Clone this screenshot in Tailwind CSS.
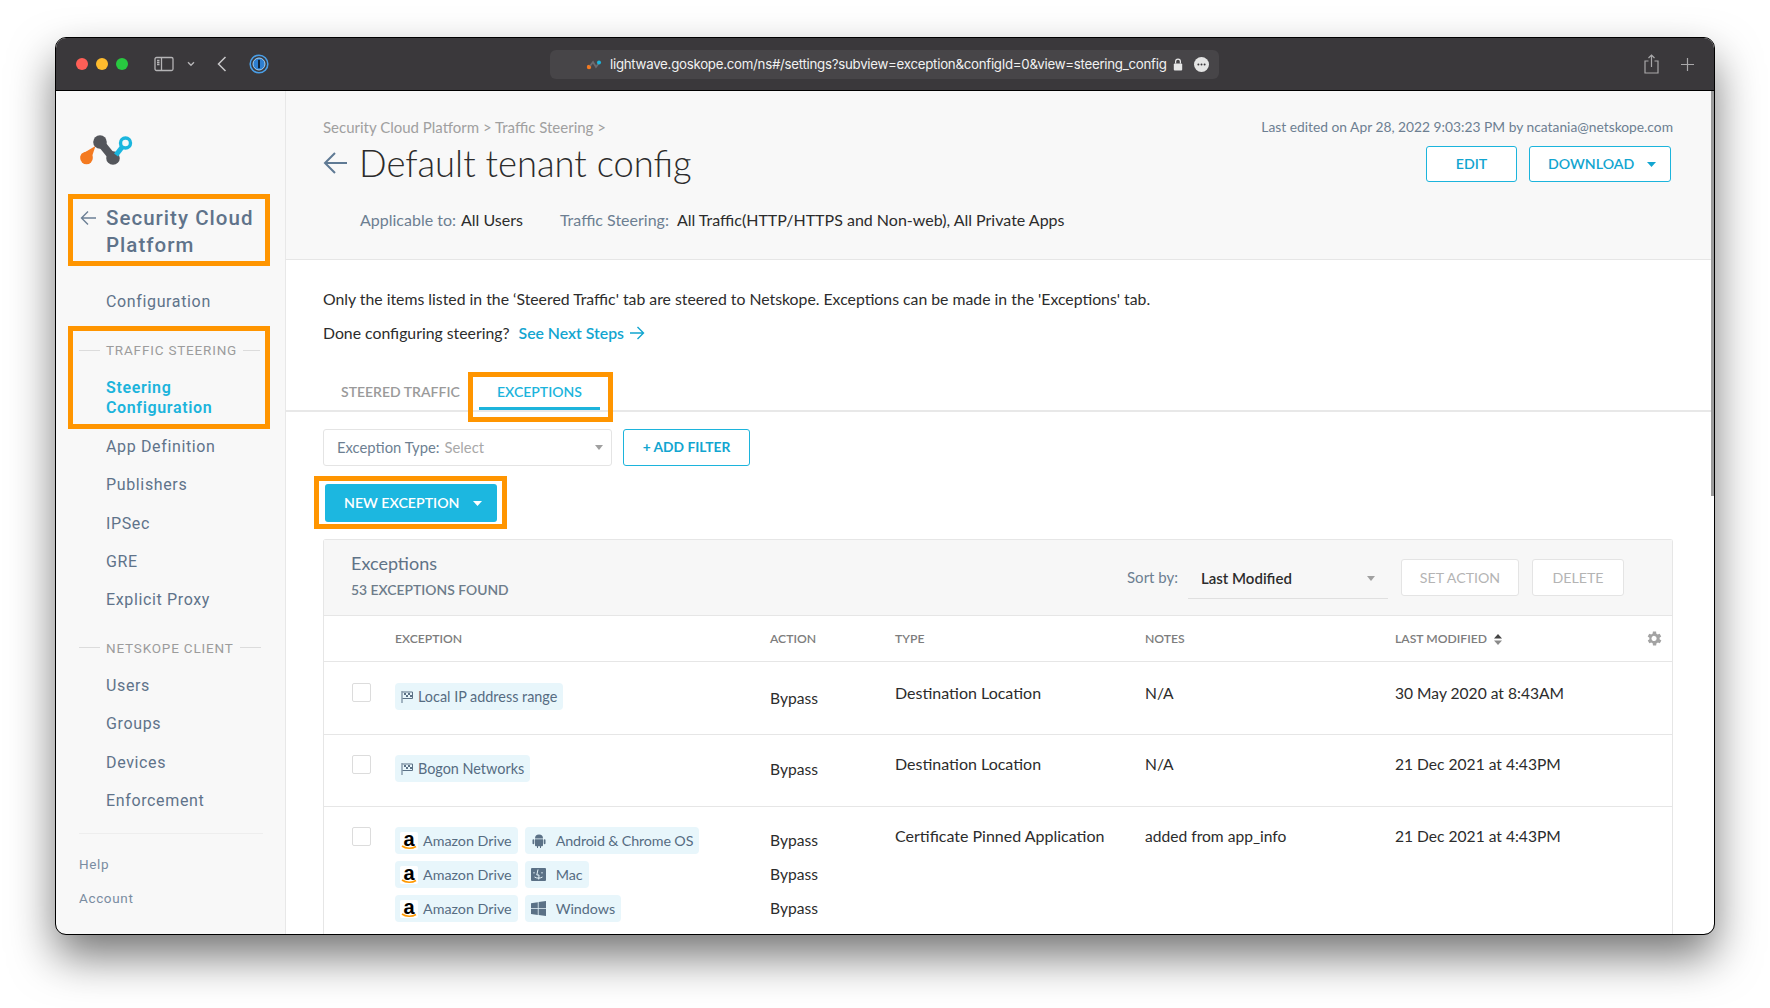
<!DOCTYPE html>
<html lang="en">
<head>
    <meta charset="UTF-8">
    <title>Default tenant config</title>
    <script src="https://cdn.jsdelivr.net/npm/@tailwindcss/browser@4"></script>
</head>
<body class="bg-white h-[1008px] overflow-hidden pt-[38px] pl-[56px] font-['Lato',sans-serif]">
    <div class="relative w-[1658px] h-[896px] rounded-[10px] overflow-hidden bg-white flex flex-col shadow-[0_22px_45px_rgba(0,0,0,0.55)] outline outline-1 outline-black">

        <!-- safari toolbar -->
        <div class="h-[53px] shrink-0 bg-[#3a383b] border-b border-black flex items-center text-[#b9b8ba] relative">
            <div class="flex gap-[8px] ml-[20px]">
                <span class="w-[12px] h-[12px] rounded-full bg-[#ff5f57]"></span>
                <span class="w-[12px] h-[12px] rounded-full bg-[#febc2e]"></span>
                <span class="w-[12px] h-[12px] rounded-full bg-[#28c840]"></span>
            </div>
            <svg class="ml-[26px]" width="20" height="16" viewBox="0 0 20 16" fill="none" stroke="#b5b4b6" stroke-width="1.3"><rect x="1" y="1.5" width="18" height="13" rx="1.5"/><path d="M7.5 1.5v13M3 4.5h2.5M3 6.5h2.5M3 8.5h2.5"/></svg>
            <svg class="ml-[13px]" width="8" height="6" viewBox="0 0 8 6" fill="none" stroke="#b5b4b6" stroke-width="1.4"><path d="M1 1.2l3 3 3-3"/></svg>
            <svg class="ml-[22px]" width="10" height="16" viewBox="0 0 10 16" fill="none" stroke="#c9c8ca" stroke-width="1.5"><path d="M8.5 1L1.5 8l7 7"/></svg>
            <svg class="ml-[22px]" width="20" height="20" viewBox="0 0 20 20" fill="none"><circle cx="10" cy="10" r="8.8" stroke="#4a9fe8" stroke-width="1.6"/><circle cx="10" cy="10" r="6" fill="#2f7fd0" stroke="#9fd0f5" stroke-width="1"/><rect x="9" y="5.8" width="2" height="8.4" fill="#10243a"/></svg>

            <div class="absolute left-[494px] w-[669px] h-[29px] top-[12px] rounded-[6px] bg-[#474548] flex items-center text-white">
                <svg class="ml-[36px]" width="16" height="10" viewBox="0 0 16 10" fill="none"><circle cx="3" cy="7" r="2.2" fill="#f47a20"/><path d="M4 6l3-4 3 5 3-4" stroke="#6b6b70" stroke-width="1.8"/><circle cx="13" cy="2.6" r="2" fill="#1bb6de"/></svg>
                <span class="ml-[8px] font-['Inter',sans-serif] text-[13.27px] tracking-[-0.02em] text-[#f1f1f1] whitespace-nowrap">lightwave.goskope.com/ns#/settings?subview=exception&amp;configId=0&amp;view=steering_config</span>
                <svg class="ml-[6px]" width="10" height="13" viewBox="0 0 10 13" fill="none"><rect x="0.8" y="5.5" width="8.4" height="7" rx="1" fill="#e6e6e6"/><path d="M2.6 5.5V3.6a2.4 2.4 0 0 1 4.8 0v1.9" stroke="#e6e6e6" stroke-width="1.2"/></svg>
                <svg class="ml-[11px]" width="15" height="15" viewBox="0 0 15 15"><circle cx="7.5" cy="7.5" r="7.5" fill="#e4e4e4"/><circle cx="4.4" cy="7.5" r="1" fill="#3a383b"/><circle cx="7.5" cy="7.5" r="1" fill="#3a383b"/><circle cx="10.6" cy="7.5" r="1" fill="#3a383b"/></svg>
            </div>

            <div class="ml-auto flex items-center gap-[22px] mr-[20px]">
                <svg width="15" height="20" viewBox="0 0 15 20" fill="none" stroke="#a9a8aa" stroke-width="1.2"><path d="M4.5 7H1v12h13V7h-3.5M7.5 13V1M4.5 4l3-3 3 3"/></svg>
                <svg width="13" height="13" viewBox="0 0 13 13" fill="none" stroke="#a9a8aa" stroke-width="1.2"><path d="M6.5 0v13M0 6.5h13"/></svg>
            </div>
        </div>

        <div class="flex flex-1 min-h-0">
            <!-- sidebar -->
            <aside class="w-[230px] shrink-0 bg-[#f8f8f8] border-r border-[#e8e8e8] font-['Roboto',sans-serif] text-[16px] tracking-[0.04em] text-[#5f738a]">
                <div class="pt-[44px] pl-[24px]">
                    <svg width="53" height="32" viewBox="0 0 53 32" fill="none">
                        <path d="M15.5 11L1 19.5l9 8z" fill="#f47a20"/>
                        <circle cx="6.5" cy="23" r="6.3" fill="#f47a20"/>
                        <path d="M20 7l13 16" stroke="#54565b" stroke-width="8"/>
                        <circle cx="20" cy="7" r="6.8" fill="#54565b"/>
                        <circle cx="33" cy="23" r="6.8" fill="#54565b"/>
                        <path d="M36 20l7-9" stroke="#1bb6de" stroke-width="5"/>
                        <circle cx="45.5" cy="8" r="5" fill="#f8f8f8" stroke="#1bb6de" stroke-width="3.4"/>
                    </svg>
                </div>
                <div class="flex mt-[38px] pl-[24px]">
                    <svg class="mt-[5px]" width="17" height="16" viewBox="0 0 17 16" fill="none" stroke="#6b7f95" stroke-width="1.4"><path d="M16 8H1.5M8 1.5L1.5 8 8 14.5"/></svg>
                    <div class="ml-[9px] text-[20.5px] leading-[27px] font-medium tracking-[0.05em] text-[#5f738a]">Security Cloud<br>Platform</div>
                </div>
                <div class="mt-[24px] h-[38.3px] flex items-center pl-[50px]">Configuration</div>

                <div class="mt-[10px] h-[38px] flex items-center pl-[23px] text-[13.5px] tracking-[0.06em] text-[#9c9c9c]">
                    <span class="w-[21px] h-px bg-[#dcdcdc]"></span><span class="mx-[6px]">TRAFFIC STEERING</span><span class="w-[17px] h-px bg-[#dcdcdc]"></span>
                </div>
                <div class="pl-[50px] mt-[9px] leading-[20px] font-semibold text-[#1cb4dc]">Steering<br>Configuration</div>
                <div class="mt-[9.5px] h-[38.3px] flex items-center pl-[50px]">App Definition</div>
                <div class="h-[38.3px] flex items-center pl-[50px]">Publishers</div>
                <div class="h-[38.3px] flex items-center pl-[50px]">IPSec</div>
                <div class="h-[38.3px] flex items-center pl-[50px]">GRE</div>
                <div class="h-[38.3px] flex items-center pl-[50px]">Explicit Proxy</div>
                <div class="mt-[9.5px] h-[38px] flex items-center pl-[23px] text-[13.5px] tracking-[0.06em] text-[#9c9c9c]">
                    <span class="w-[21px] h-px bg-[#dcdcdc]"></span><span class="mx-[6px]">NETSKOPE CLIENT</span><span class="w-[21px] h-px bg-[#dcdcdc]"></span>
                </div>
                <div class="h-[38.3px] flex items-center pl-[50px]">Users</div>
                <div class="h-[38.3px] flex items-center pl-[50px]">Groups</div>
                <div class="h-[38.3px] flex items-center pl-[50px]">Devices</div>
                <div class="h-[38.3px] flex items-center pl-[50px]">Enforcement</div>
                <div class="ml-[23px] mr-[22px] mt-[13px] h-px bg-[#eeeeee]"></div>
                <div class="mt-[15px] h-[30px] flex items-center pl-[23px] text-[13.5px] text-[#7a8ca1]">Help</div>
                <div class="mt-[4px] h-[30px] flex items-center pl-[23px] text-[13.5px] text-[#7a8ca1]">Account</div>
            </aside>

            <!-- main -->
            <main class="flex-1 min-w-0 relative">
                <div class="h-[169px] bg-[#f8f8f8] border-b border-[#e6e6e6] pl-[37px] pr-[41px] pt-[26px] relative">
                    <div class="flex justify-between text-[15px] leading-[20px]">
                        <span class="text-[#a0a0a0]">Security Cloud Platform &gt; Traffic Steering &gt;</span>
                        <span class="text-[13.8px] text-[#6d7f92]">Last edited on Apr 28, 2022 9:03:23 PM by ncatania@netskope.com</span>
                    </div>
                    <div class="flex justify-between">
                        <div class="flex items-center h-[48px] mt-[2px]">
                            <svg width="24" height="24" viewBox="0 0 24 24" fill="none" stroke="#5f7a94" stroke-width="2"><path d="M24 12H2M12 2L2 12l10 10"/></svg>
                            <h1 class="ml-[12px] text-[36.4px] font-light text-[#2c2c2c] whitespace-nowrap">Default tenant config</h1>
                        </div>
                        <div class="flex gap-[12px] mr-[2px] mt-[9px]">
                            <button class="w-[91px] h-[36px] border border-[#1cb4dc] rounded-[3px] bg-white text-[14.2px] font-semibold text-[#12a5d0]">EDIT</button>
                            <button class="w-[142px] h-[36px] border border-[#1cb4dc] rounded-[3px] bg-white text-[14.2px] font-semibold text-[#12a5d0] flex items-center pl-[18px]">DOWNLOAD
                                <svg class="ml-[13px]" width="9" height="5" viewBox="0 0 9 5"><path d="M0 0h9L4.5 5z" fill="#12a5d0"/></svg>
                            </button>
                        </div>
                    </div>
                    <div class="ml-[37px] mt-[22px] flex text-[16px] leading-[22px] whitespace-nowrap">
                        <span class="text-[#6d7f92]">Applicable to:</span><span class="ml-[5px] text-[#2c2c2c]">All Users</span>
                        <span class="ml-[37px] text-[#6d7f92]">Traffic Steering:</span><span class="ml-[8px] text-[#2c2c2c]">All Traffic(HTTP/HTTPS and Non-web), All Private Apps</span>
                    </div>
                </div>

                <div class="pl-[37px] pt-[28px] text-[15.8px] leading-[22px] text-[#2c2c2c]">
                    <p>Only the items listed in the ‘Steered Traffic' tab are steered to Netskope. Exceptions can be made in the 'Exceptions' tab.</p>
                    <p class="mt-[12px] flex items-center">Done configuring steering?
                        <span class="ml-[9px] font-semibold text-[#12a5d0] flex items-center">See Next Steps
                            <svg class="ml-[6px]" width="15" height="14" viewBox="0 0 15 14" fill="none" stroke="#12a5d0" stroke-width="1.4"><path d="M0 7h13.5M7.5 1l6 6-6 6"/></svg>
                        </span>
                    </p>
                </div>

                <div class="mt-[25px] h-[43px] border-b-2 border-[#e8e8e8] flex pl-[37px] text-[14px] font-semibold">
                    <div class="w-[156px] pl-[18px] pt-[12px] text-[#9a9a9a]">STEERED TRAFFIC</div>
                    <div class="w-[121px] pl-[18px] pt-[12px] text-[#1cb4dc] h-[41px] border-b-[3px] border-[#1cb4dc]">EXCEPTIONS</div>
                </div>

                <div class="flex gap-[11px] pl-[37px] mt-[17px]">
                    <div class="w-[289px] h-[37px] border border-[#e4e4e4] rounded-[3px] flex items-center pl-[13px] pr-[8px] text-[14.8px]">
                        <span class="text-[#6d7f92]">Exception Type:</span><span class="ml-[5px] text-[#a8a8a8]">Select</span>
                        <svg class="ml-auto" width="8" height="5" viewBox="0 0 8 5"><path d="M0 0h8L4 5z" fill="#a0a0a0"/></svg>
                    </div>
                    <button class="w-[127px] h-[37px] border border-[#1cb4dc] rounded-[3px] text-[13.8px] font-bold text-[#12a5d0]">+ ADD FILTER</button>
                </div>

                <button class="ml-[39px] mt-[18px] w-[172px] h-[38px] bg-[#1cb7e0] rounded-[3px] flex items-center pl-[19px] text-[14.2px] font-semibold text-white">NEW EXCEPTION
                    <svg class="ml-[13px]" width="9" height="5" viewBox="0 0 9 5"><path d="M0 0h9L4.5 5z" fill="#fff"/></svg>
                </button>

                <section class="ml-[37px] w-[1350px] mt-[17px] border-x border-t border-[#e6e6e6] rounded-t-[3px]">
                    <div class="h-[76px] bg-[#f7f7f7] border-b border-[#e6e6e6] flex items-center pl-[27px] relative">
                        <div class="mb-[4px]">
                            <div class="text-[18px] leading-[24px] text-[#5f7387]">Exceptions</div>
                            <div class="mt-[4px] text-[13.9px] leading-[22px] font-semibold text-[#6d7c8a]">53 EXCEPTIONS FOUND</div>
                        </div>
                        <div class="ml-auto mr-[48px] flex items-center">
                            <span class="text-[15px] text-[#6d7f92]">Sort by:</span>
                            <div class="ml-[10px] w-[200px] h-[38px] mt-[4px] pb-[2px] border-b border-[#e0e0e0] flex items-center pl-[13px] pr-[13px] text-[15px] font-semibold text-[#2c2c2c]">Last Modified
                                <svg class="ml-auto" width="8" height="5" viewBox="0 0 8 5"><path d="M0 0h8L4 5z" fill="#a0a0a0"/></svg>
                            </div>
                            <button class="ml-[13px] w-[118px] h-[37px] border border-[#e4e4e4] rounded-[3px] bg-white text-[14.2px] text-[#b4b4b4]">SET ACTION</button>
                            <button class="ml-[13px] w-[92px] h-[37px] border border-[#e4e4e4] rounded-[3px] bg-white text-[14.2px] text-[#b4b4b4]">DELETE</button>
                        </div>
                    </div>

                    <div class="h-[46px] pt-[2px] border-b border-[#e6e6e6] grid grid-cols-[71px_375px_125px_250px_250px_1fr] items-center text-[12.2px] font-semibold text-[#7d7d7d]">
                        <span></span>
                        <span>EXCEPTION</span>
                        <span>ACTION</span>
                        <span>TYPE</span>
                        <span>NOTES</span>
                        <div class="flex items-center">LAST MODIFIED
                            <svg class="ml-[7px]" width="8" height="11" viewBox="0 0 8 11"><path d="M0 4.5L4 0l4 4.5z" fill="#444"/><path d="M0 6.5L4 11l4-4.5z" fill="#8a8a8a"/></svg>
                            <svg class="ml-auto mr-[8px] -mt-[2px]" width="19" height="19" viewBox="0 0 24 24"><path fill="#a3a3a3" d="M19.4 13a7.6 7.6 0 0 0 0-2l2.1-1.6-2-3.5-2.5 1a7.6 7.6 0 0 0-1.7-1L15 3.3h-4l-.4 2.6a7.6 7.6 0 0 0-1.7 1l-2.5-1-2 3.5L6.6 11a7.6 7.6 0 0 0 0 2l-2.1 1.6 2 3.5 2.5-1a7.6 7.6 0 0 0 1.7 1l.4 2.6h4l.4-2.6a7.6 7.6 0 0 0 1.7-1l2.5 1 2-3.5zM13 15.2a3.3 3.3 0 1 1 0-6.5 3.3 3.3 0 0 1 0 6.5z" transform="translate(-1 0)"/></svg>
                        </div>
                    </div>

                    <div class="h-[73px] border-b border-[#e6e6e6] grid grid-cols-[71px_375px_125px_250px_250px_1fr] text-[15.6px] leading-[20px] text-[#2c2c2c]">
                        <div class="pl-[28px] pt-[21px]"><div class="w-[19px] h-[19px] border border-[#dcdcdc] rounded-[2px]"></div></div>
                        <div class="pt-[21px]">
                            <span class="inline-flex items-center h-[27px] px-[6px] rounded-[4px] bg-[#e8f6fb] text-[14.4px] text-[#566c82]">
                                <svg width="12" height="12" viewBox="0 0 12 12"><path d="M1 0v12" stroke="#5b7186" stroke-width="1"/><path fill="none" stroke="#5b7186" d="M1.5 1h10v6.5h-10"/><path fill="#5b7186" d="M3 2h2v2H3zM7 2h2v2H7zM5 4h2v2H5zM9 4h2v2H9z"/></svg>
                                <span class="ml-[5px]">Local IP address range</span>
                            </span>
                        </div>
                        <div class="pt-[26px]">Bypass</div>
                        <div class="pt-[21px] text-[16px]">Destination Location</div>
                        <div class="pt-[21px]">N/A</div>
                        <div class="pt-[21px]">30 May 2020 at 8:43AM</div>
                    </div>

                    <div class="h-[72px] border-b border-[#e6e6e6] grid grid-cols-[71px_375px_125px_250px_250px_1fr] text-[15.6px] leading-[20px] text-[#2c2c2c]">
                        <div class="pl-[28px] pt-[20px]"><div class="w-[19px] h-[19px] border border-[#dcdcdc] rounded-[2px]"></div></div>
                        <div class="pt-[20px]">
                            <span class="inline-flex items-center h-[27px] px-[6px] rounded-[4px] bg-[#e8f6fb] text-[14.4px] text-[#566c82]">
                                <svg width="12" height="12" viewBox="0 0 12 12"><path d="M1 0v12" stroke="#5b7186" stroke-width="1"/><path fill="none" stroke="#5b7186" d="M1.5 1h10v6.5h-10"/><path fill="#5b7186" d="M3 2h2v2H3zM7 2h2v2H7zM5 4h2v2H5zM9 4h2v2H9z"/></svg>
                                <span class="ml-[5px]">Bogon Networks</span>
                            </span>
                        </div>
                        <div class="pt-[24px]">Bypass</div>
                        <div class="pt-[19px] text-[16px]">Destination Location</div>
                        <div class="pt-[19px]">N/A</div>
                        <div class="pt-[19px]">21 Dec 2021 at 4:43PM</div>
                    </div>

                    <div class="pb-[30px] grid grid-cols-[71px_375px_125px_250px_250px_1fr] text-[15.6px] leading-[20px] text-[#2c2c2c]">
                        <div class="pl-[28px] pt-[20px]"><div class="w-[19px] h-[19px] border border-[#dcdcdc] rounded-[2px]"></div></div>
                        <div class="pt-[20px] flex flex-col gap-[7px]">
                            <div class="flex gap-[7px]">
                                <span class="inline-flex items-center h-[27px] pl-[5px] pr-[6px] rounded-[4px] bg-[#e8f6fb] text-[14.3px] text-[#566c82]">
                                    <span class="relative w-[18px] h-[18px] rounded-[2px] bg-white flex justify-center overflow-visible">
                                        <span class="font-['Liberation_Sans',sans-serif] font-bold text-[20px] leading-[15px] text-black">a</span>
                                        <svg class="absolute left-0 bottom-0" width="18" height="5" viewBox="0 0 18 5" fill="none"><path d="M2 1c4 3 10 3 14 .5" stroke="#f90" stroke-width="1.6"/></svg>
                                    </span>
                                    <span class="ml-[5px]">Amazon Drive</span>
                                </span>
                                <span class="inline-flex items-center h-[27px] pl-[7px] pr-[6px] rounded-[4px] bg-[#e8f6fb] text-[14.3px] text-[#566c82]">
                                    <svg width="14" height="15" viewBox="0 0 14 15" fill="#5b7186"><path d="M3 5.5a4 4 0 0 1 8 0zM3 6.2h8v6a1 1 0 0 1-1 1H9V15H8v-1.8H6V15H5v-1.8H4a1 1 0 0 1-1-1z"/><rect x="0.5" y="6.2" width="1.8" height="5" rx=".9"/><rect x="11.7" y="6.2" width="1.8" height="5" rx=".9"/></svg>
                                    <span class="ml-[10px] tracking-[-0.01em]">Android &amp; Chrome OS</span>
                                </span>
                            </div>
                            <div class="flex gap-[7px]">
                                <span class="inline-flex items-center h-[27px] pl-[5px] pr-[6px] rounded-[4px] bg-[#e8f6fb] text-[14.3px] text-[#566c82]">
                                    <span class="relative w-[18px] h-[18px] rounded-[2px] bg-white flex justify-center overflow-visible">
                                        <span class="font-['Liberation_Sans',sans-serif] font-bold text-[20px] leading-[15px] text-black">a</span>
                                        <svg class="absolute left-0 bottom-0" width="18" height="5" viewBox="0 0 18 5" fill="none"><path d="M2 1c4 3 10 3 14 .5" stroke="#f90" stroke-width="1.6"/></svg>
                                    </span>
                                    <span class="ml-[5px]">Amazon Drive</span>
                                </span>
                                <span class="inline-flex items-center h-[27px] pl-[6px] pr-[6px] rounded-[4px] bg-[#e8f6fb] text-[14.3px] text-[#566c82]">
                                    <svg width="15" height="13" viewBox="0 0 15 13"><rect width="15" height="13" rx="1" fill="#5b7186"/><path d="M7 1.5L5.8 7H8l-.3 4.5M3 4v1.5M11 4v1.5M3.5 9c2.5 1.5 5.5 1.5 8 0" stroke="#e8f6fb" stroke-width="1" fill="none"/></svg>
                                    <span class="ml-[10px]">Mac</span>
                                </span>
                            </div>
                            <div class="flex gap-[7px]">
                                <span class="inline-flex items-center h-[27px] pl-[5px] pr-[6px] rounded-[4px] bg-[#e8f6fb] text-[14.3px] text-[#566c82]">
                                    <span class="relative w-[18px] h-[18px] rounded-[2px] bg-white flex justify-center overflow-visible">
                                        <span class="font-['Liberation_Sans',sans-serif] font-bold text-[20px] leading-[15px] text-black">a</span>
                                        <svg class="absolute left-0 bottom-0" width="18" height="5" viewBox="0 0 18 5" fill="none"><path d="M2 1c4 3 10 3 14 .5" stroke="#f90" stroke-width="1.6"/></svg>
                                    </span>
                                    <span class="ml-[5px]">Amazon Drive</span>
                                </span>
                                <span class="inline-flex items-center h-[27px] pl-[6px] pr-[6px] rounded-[4px] bg-[#e8f6fb] text-[14.3px] text-[#566c82]">
                                    <svg width="15" height="15" viewBox="0 0 15 15" fill="#5b7186"><path d="M0 2.2l6.8-1v6H0zM7.6 1l7.4-1v7.2H7.6zM0 8h6.8v6L0 13zM7.6 8H15v7l-7.4-1z"/></svg>
                                    <span class="ml-[10px]">Windows</span>
                                </span>
                            </div>
                        </div>
                        <div class="pt-[23px] flex flex-col gap-[14px]"><span>Bypass</span><span>Bypass</span><span>Bypass</span></div>
                        <div class="pt-[19px] text-[16px]">Certificate Pinned Application</div>
                        <div class="pt-[19px]">added from app_info</div>
                        <div class="pt-[19px]">21 Dec 2021 at 4:43PM</div>
                    </div>
                </section>
            </main>
        </div>

        <!-- page scrollbar -->
        <div class="absolute right-0 top-[53px] w-[3px] h-[405px] bg-[#9a9a9a]"></div>

        <!-- orange callouts -->
        <div class="absolute left-[12px] top-[156px] w-[202px] h-[72px] border-[5px] border-[#ff9500]"></div>
        <div class="absolute left-[12px] top-[288px] w-[202px] h-[103px] border-[5px] border-[#ff9500]"></div>
        <div class="absolute left-[412px] top-[334px] w-[145px] h-[50px] border-[5px] border-[#ff9500]"></div>
        <div class="absolute left-[258px] top-[438px] w-[193px] h-[53px] border-[5px] border-[#ff9500]"></div>
    </div>
</body>
</html>
